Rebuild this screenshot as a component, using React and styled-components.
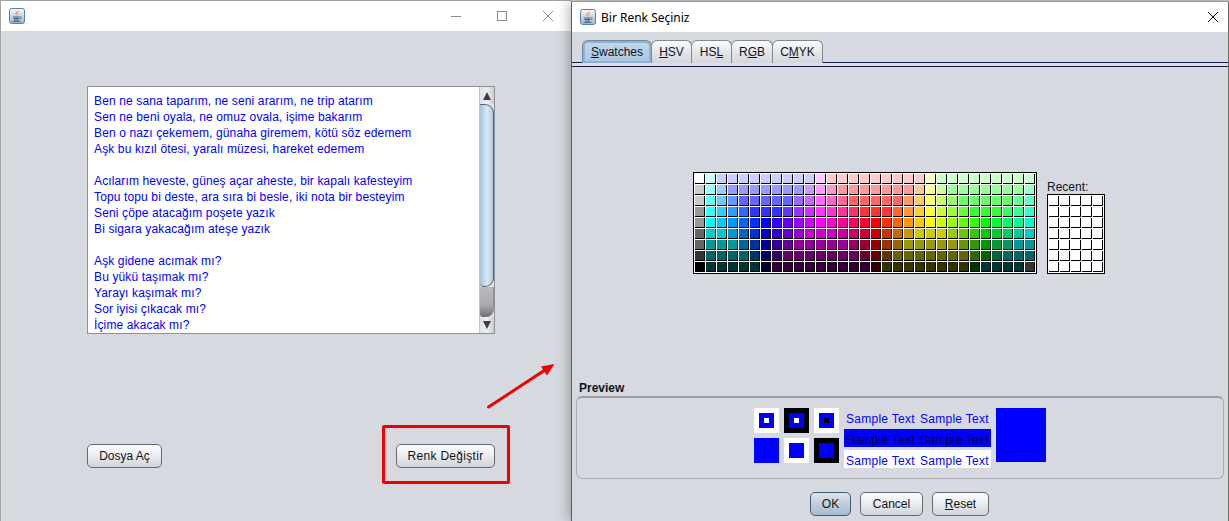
import React from "react";
import styled, { createGlobalStyle } from "styled-components";

const Global = createGlobalStyle`
  html, body { margin: 0; padding: 0; background: #d6d9df; }
  body { width: 1229px; height: 521px; overflow: hidden; font-family: "Liberation Sans", Arial, sans-serif; }
  * { box-sizing: border-box; }
`;

const Desktop = styled.div`
  display: flex;
  width: 1229px;
  height: 521px;
  overflow: hidden;
`;

const Window = styled.section`
  position: relative;
  display: flex;
  flex-direction: column;
  flex: none;
  width: ${(p) => p.$width}px;
  height: 521px;
  background: #d6d9df;
  border-top: 1px solid ${(p) => (p.$active ? "#9b9b9b" : "#a3a3a3")};
  border-left: 1px solid ${(p) => (p.$active ? "#5c5c5c" : "#a3a3a3")};
  border-right: ${(p) => (p.$active ? "1px solid #6a6a6a" : "none")};
  z-index: ${(p) => (p.$active ? 2 : 1)};
  box-shadow: ${(p) => (p.$active ? "0 0 14px rgba(0,0,0,.38)" : "none")};
  margin-top: ${(p) => (p.$active ? 1 : 0)}px;
`;

const TitleBar = styled.header`
  display: flex;
  align-items: center;
  flex: none;
  height: 30px;
  padding-left: 8px;
  background: #fff;
`;

const TitleText = styled.span`
  margin-left: 5px;
  font: 12px "Noto Sans", "Open Sans", sans-serif;
  color: #000;
  white-space: nowrap;
`;

const Controls = styled.div`
  display: flex;
  margin-left: auto;
`;

const ControlBox = styled.span`
  display: flex;
  align-items: center;
  justify-content: center;
  width: ${(p) => p.$w || 46}px;
  height: 30px;
`;

const JavaIcon = () => (
  <svg width="16" height="16" viewBox="0 0 16 16">
    <defs>
      <linearGradient id="jv" x1="0" y1="0" x2="0" y2="1">
        <stop offset="0" stopColor="#f4f7fa" />
        <stop offset="1" stopColor="#9db7cc" />
      </linearGradient>
    </defs>
    <rect x=".5" y=".5" width="15" height="15" rx="2" fill="url(#jv)" stroke="#5f7f98" />
    <path d="M9.5 2.2C10 4 7 5 7.2 6.6c.1.8.8 1.3 1 1.8C7.6 7.4 6 6.6 6.6 5c.4-1.1 2.7-1.600 2.900-2.800z" fill="#e8761e" />
    <path d="M10.800 4.300c-.5.8-2 1.300-1.700 2.500.1.500.4.800.5 1.100-.6-.5-1.300-1.300-1-2.200.3-.8 1.700-.8 2.200-1.400z" fill="#e8761e" />
    <path d="M4 9h6.500M4.500 10.500h6M5 12h5M3.500 13.400h8M11 8.800c1.500-.3 1.800 1.400.2 1.800" stroke="#47657f" strokeWidth="1" fill="none" />
  </svg>
);

const Minimize = () => (
  <svg width="12" height="12" viewBox="0 0 12 12"><path d="M1 6.500h10" stroke="#8b8b8b" /></svg>
);
const Restore = () => (
  <svg width="12" height="12" viewBox="0 0 12 12"><rect x="1.500" y="1.500" width="9" height="9" fill="none" stroke="#8b8b8b" /></svg>
);
const Close = ({ c }) => (
  <svg width="12" height="12" viewBox="0 0 12 12"><path d="M1 1l10 10M11 1L1 11" stroke={c} strokeWidth="1" /></svg>
);

/* ---------- left window ---------- */

const LeftBody = styled.div`
  display: flex;
  flex-direction: column;
  padding: 55px 76px 0 86px;
`;

const Pane = styled.div`
  display: flex;
  width: 408px;
  height: 248px;
  background: #fff;
  border: 1px solid #8e9096;
`;

const PaneText = styled.div`
  flex: 1;
  overflow: hidden;
  padding: 6px 0 0 6px;
  font-size: 12px;
  line-height: 16px;
  letter-spacing: 0.13px;
  color: #0000ff;
  white-space: pre;
`;

const Scroll = styled.div`
  display: flex;
  flex-direction: column;
  flex: none;
  width: 15px;
  border-left: 1px solid #c4c6ca;
  background: #e2e4e8;
`;

const ScrollBtn = styled.div`
  display: flex;
  align-items: center;
  justify-content: center;
  flex: none;
  height: ${(p) => p.$h}px;
  background: linear-gradient(90deg, #dfe1e5, #eceef1 50%, #c9cbd0);
`;

const Tri = styled.span`
  width: 0;
  height: 0;
  border-left: 4px solid transparent;
  border-right: 4px solid transparent;
  ${(p) => (p.$down ? "border-top: 8px solid #3c3f44;" : "border-bottom: 8px solid #3c3f44;")}
`;

const Thumb = styled.div`
  flex: none;
  height: 183px;
  background: linear-gradient(90deg, #a5c2da, #dbe8f2 55%, #abc8df);
  border: 1px solid #4d6578;
  border-left: none;
  border-radius: 0 9px 9px 4px;
`;

const Track = styled.div`
  flex: 1;
  background: linear-gradient(180deg, #b9bbbe, #a8aaad 60%, #6c6e72);
  border-radius: 0 0 8px 3px;
  border-right: 1px solid #8e9096;
`;

const ButtonRow = styled.div`
  display: flex;
  justify-content: ${(p) => p.$justify || "space-between"};
  gap: ${(p) => p.$gap || 0}px;
  margin-top: ${(p) => p.$top}px;
  padding-right: ${(p) => p.$pr || 0}px;
`;

const Btn = styled.button`
  flex: none;
  width: ${(p) => p.$w}px;
  height: 24px;
  padding: 0;
  font: 12px "Liberation Sans", Arial, sans-serif;
  letter-spacing: ${(p) => p.$ls || 0}px;
  color: #10151c;
  border: 1px solid ${(p) => (p.$default ? "#3e5c75" : "#64686f")};
  border-radius: 5px;
  background: ${(p) =>
    p.$default
      ? "linear-gradient(180deg, #dde4ea, #c3d0dc 45%, #a5bbce)"
      : "linear-gradient(180deg, #fbfbfc, #eceef1 45%, #cfd2d8)"};
`;

const Mn = styled.span`
  text-decoration: underline;
`;

const RedFrame = styled.div`
  position: absolute;
  left: 381px;
  top: 424px;
  width: 128px;
  height: 59px;
  border: 3px solid #f00000;
  border-radius: 2px;
`;

const ArrowSvg = styled.svg`
  position: absolute;
  left: 480px;
  top: 355px;
`;

/* ---------- right window ---------- */

const TabStrip = styled.div`
  display: flex;
  flex: none;
  height: 23px;
  margin-top: 8px;
  padding-left: 10px;
  border-bottom: 1px solid #12204a;
`;

const Tab = styled.div`
  display: flex;
  align-items: center;
  justify-content: center;
  flex: none;
  width: ${(p) => p.$w}px;
  height: 23px;
  font-size: 12px;
  color: #10151c;
  border: 1px solid ${(p) => (p.$on ? "#6f8ba3" : "#84878d")};
  border-bottom: none;
  border-radius: 6px 6px 0 0;
  background: ${(p) =>
    p.$on
      ? "linear-gradient(180deg, #c6d8e8, #a9c6e0)"
      : "linear-gradient(180deg, #fafbfc, #e0e2e7 60%, #d3d6dc)"};
  box-shadow: ${(p) => (p.$on ? "inset 0 0 0 2px #8fb2d2" : "none")};
  margin-left: ${(p) => (p.$on ? 0 : -1)}px;
`;

const TabRule = styled.div`
  flex: none;
  height: 4px;
  background: #d9dfe9;
  border-bottom: 1px solid #101a3c;
`;

const SwatchArea = styled.div`
  display: flex;
  align-items: flex-end;
  gap: 10px;
  flex: none;
  height: 207px;
  padding-left: 121px;
`;

const SwatchGrid = styled.div`
  display: grid;
  grid-template-columns: repeat(${(p) => p.$cols}, 10px);
  grid-auto-rows: 10px;
  gap: 1px;
  padding: 1px 0 0 1px;
  width: ${(p) => p.$cols * 11 + 3}px;
  height: ${(p) => p.$rows * 11 + 3}px;
  background: #fff;
  border: 1px solid #000;
`;

const Swatch = styled.span`
  display: block;
  border-right: 1px solid #000;
  border-bottom: 1px solid #000;
`;

const RecentCol = styled.div`
  display: flex;
  flex-direction: column;
`;

const RecentLabel = styled.span`
  font-size: 12px;
  line-height: 14px;
  color: #10151c;
`;

const PreviewLabel = styled.div`
  flex: none;
  height: 15px;
  margin-top: 107px;
  padding-left: 7px;
  font-size: 12px;
  font-weight: bold;
  line-height: 15px;
  color: #10151c;
`;

const PreviewGroup = styled.div`
  display: flex;
  justify-content: center;
  align-items: flex-start;
  gap: 5px;
  flex: none;
  height: 83px;
  margin: 0 4px;
  padding-top: 10px;
  border: 1px solid #a9acb1;
  border-top: 2px solid #9b9ea3;
  border-radius: 6px;
`;

const SquareGrid = styled.div`
  display: grid;
  grid-template-columns: repeat(3, 25px);
  grid-auto-rows: 25px;
  gap: 5px;
`;

const Square = styled.div`
  display: flex;
  align-items: center;
  justify-content: center;
  background: ${(p) => p.$outer};
`;

const SquareInner = styled.div`
  display: flex;
  align-items: center;
  justify-content: center;
  width: 15px;
  height: 15px;
  background: #0000ff;
`;

const SquareDot = styled.div`
  width: 5px;
  height: 5px;
  background: ${(p) => p.$c};
`;

const SampleCol = styled.div`
  display: flex;
  flex-direction: column;
  gap: 3px;
  width: 147px;
`;

const SampleRow = styled.div`
  display: flex;
  height: 18px;
  padding-left: 2px;
  font-size: 12px;
  line-height: 22px;
  letter-spacing: 0.27px;
  white-space: nowrap;
  color: ${(p) => p.$fg};
  background: ${(p) => p.$bg};
`;

const SampleText = styled.span`
  flex: none;
  width: 74px;
`;

const BigBlue = styled.div`
  width: 50px;
  height: 54px;
  background: #0000ff;
`;

const rows = [
  "fff cff ccf ccf ccf ccf ccf ccf ccf ccf ccf fcf fcc fcc fcc fcc fcc fcc fcc fcc fcc ffc cfc cfc cfc cfc cfc cfc cfc cfc cfc",
  "ccc 9ff 9cf 99f 99f 99f 99f 99f 99f 99f c9f f9f f9c f99 f99 f99 f99 f99 f99 f99 fc9 ff9 cf9 9f9 9f9 9f9 9f9 9f9 9f9 9f9 9fc",
  "ccc 6ff 6cf 69f 66f 66f 66f 66f 66f 96f c6f f6f f6c f69 f66 f66 f66 f66 f66 f96 fc6 ff6 cf6 9f6 6f6 6f6 6f6 6f6 6f6 6f9 6fc",
  "999 3ff 3cf 39f 36f 33f 33f 33f 63f 93f c3f f3f f3c f39 f36 f33 f33 f33 f63 f93 fc3 ff3 cf3 9f3 6f3 3f3 3f3 3f3 3f6 3f9 3fc",
  "999 0ff 0cf 09f 06f 03f 00f 30f 60f 90f c0f f0f f0c f09 f06 f03 f00 f30 f60 f90 fc0 ff0 cf0 9f0 6f0 3f0 0f0 0f3 0f6 0f9 0fc",
  "666 0cc 0cc 09c 06c 03c 00c 30c 60c 90c c0c c0c c0c c09 c06 c03 c00 c30 c60 c90 cc0 cc0 cc0 9c0 6c0 3c0 0c0 0c3 0c6 0c9 0cc",
  "666 099 099 099 069 039 009 309 609 909 909 909 909 909 906 903 900 930 960 990 990 990 990 990 690 390 090 093 096 099 099",
  "333 066 066 066 066 036 006 306 606 606 606 606 606 606 606 603 600 630 660 660 660 660 660 660 660 360 060 063 066 066 066",
  "000 033 033 033 033 033 003 303 303 303 303 303 303 303 303 303 300 330 330 330 330 330 330 330 330 030 033 033 033 033 333",
].flatMap((r) => r.split(" "));

const poem = `Ben ne sana taparım, ne seni ararım, ne trip atarım
Sen ne beni oyala, ne omuz ovala, işime bakarım
Ben o nazı çekemem, günaha giremem, kötü söz edemem
Aşk bu kızıl ötesi, yaralı müzesi, hareket edemem

Acılarım heveste, güneş açar aheste, bir kapalı kafesteyim
Topu topu bi deste, ara sıra bi besle, iki nota bir besteyim
Seni çöpe atacağım poşete yazık
Bi sigara yakacağım ateşe yazık

Aşk gidene acımak mı?
Bu yükü taşımak mı?
Yarayı kaşımak mı?
Sor iyisi çıkacak mı?
İçime akacak mı?`;

const squares = [
  ["#fff", "#fff"],
  ["#000", "#fff"],
  ["#fff", "#000"],
  ["#0000ff", null],
  ["#fff", null],
  ["#000", null],
];

const sampleRows = [
  ["#0000ff", "transparent"],
  ["#050530", "#0000ff"],
  ["#0000ff", "#fff"],
];

export default function App() {
  return (
    <Desktop>
      <Global />
      <Window $width={571}>
        <TitleBar>
          <JavaIcon />
          <Controls>
            <ControlBox><Minimize /></ControlBox>
            <ControlBox><Restore /></ControlBox>
            <ControlBox><Close c="#8b8b8b" /></ControlBox>
          </Controls>
        </TitleBar>
        <LeftBody>
          <Pane>
            <PaneText>{poem}</PaneText>
            <Scroll>
              <ScrollBtn $h={17}><Tri /></ScrollBtn>
              <Thumb />
              <Track />
              <ScrollBtn $h={16}><Tri $down /></ScrollBtn>
            </Scroll>
          </Pane>
          <ButtonRow $top={110}>
            <Btn $w={75}>Dosya Aç</Btn>
            <Btn $w={99} $ls={0.3}>Renk Değiştir</Btn>
          </ButtonRow>
        </LeftBody>
        <RedFrame />
        <ArrowSvg width="80" height="60" viewBox="0 0 80 60">
          <path d="M7.500 51L64 14" stroke="#f00000" strokeWidth="3" strokeLinecap="round" />
          <path d="M73.500 8L60 10.500l6 9z" fill="#f00000" />
        </ArrowSvg>
      </Window>
      <Window $width={658} $active>
        <TitleBar>
          <JavaIcon />
          <TitleText>Bir Renk Seçiniz</TitleText>
          <Controls>
            <ControlBox $w={31}><Close c="#000" /></ControlBox>
          </Controls>
        </TitleBar>
        <TabStrip>
          <Tab $w={70} $on><span><Mn>S</Mn>watches</span></Tab>
          <Tab $w={41}><span><Mn>H</Mn>SV</span></Tab>
          <Tab $w={41}><span>HS<Mn>L</Mn></span></Tab>
          <Tab $w={42}><span>R<Mn>G</Mn>B</span></Tab>
          <Tab $w={51}><span>C<Mn>M</Mn>YK</span></Tab>
        </TabStrip>
        <TabRule />
        <SwatchArea>
          <SwatchGrid $cols={31} $rows={9}>
            {rows.map((c, i) => (
              <Swatch key={i} style={{ background: `#${c}` }} />
            ))}
          </SwatchGrid>
          <RecentCol>
            <RecentLabel>Recent:</RecentLabel>
            <SwatchGrid $cols={5} $rows={7}>
              {Array.from({ length: 35 }, (_, i) => (
                <Swatch key={i} />
              ))}
            </SwatchGrid>
          </RecentCol>
        </SwatchArea>
        <PreviewLabel>Preview</PreviewLabel>
        <PreviewGroup>
          <SquareGrid>
            {squares.map(([outer, dot], i) => (
              <Square key={i} $outer={outer}>
                {i !== 3 && <SquareInner>{dot && <SquareDot $c={dot} />}</SquareInner>}
              </Square>
            ))}
          </SquareGrid>
          <SampleCol>
            {sampleRows.map(([fg, bg], i) => (
              <SampleRow key={i} $fg={fg} $bg={bg}>
                <SampleText>Sample Text</SampleText>
                <SampleText>Sample Text</SampleText>
              </SampleRow>
            ))}
          </SampleCol>
          <BigBlue />
        </PreviewGroup>
        <ButtonRow $top={13} $justify="center" $gap={9} $pr={1}>
          <Btn $w={41} $default>OK</Btn>
          <Btn $w={63}>Cancel</Btn>
          <Btn $w={57}><Mn>R</Mn>eset</Btn>
        </ButtonRow>
      </Window>
    </Desktop>
  );
}
